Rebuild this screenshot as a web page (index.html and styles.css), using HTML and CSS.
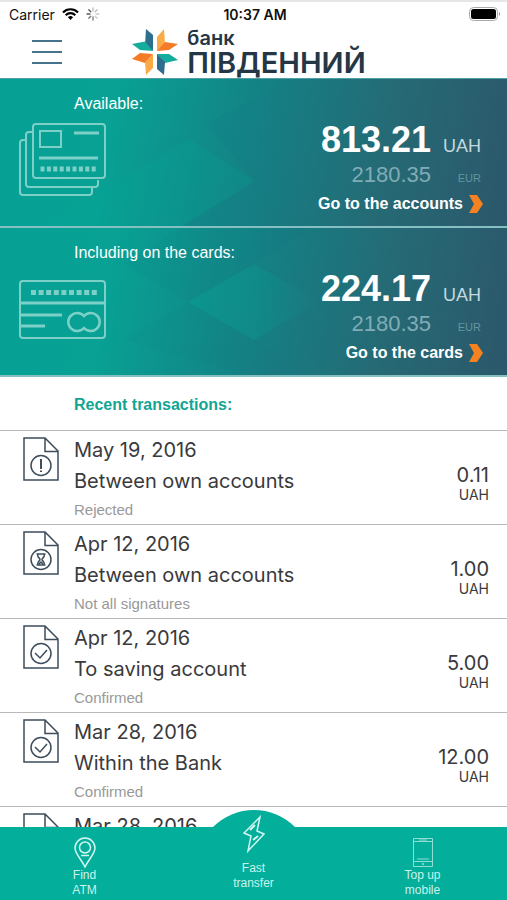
FILE: index.html
```html
<!DOCTYPE html>
<html lang="en">

<head>
    <meta charset="UTF-8">
    <meta name="viewport" content="width=device-width, initial-scale=1.0">
    <title>Банк Південний</title>
    <link rel="stylesheet" href="styles.css">
</head>

<body>
    <!-- shared shapes -->
    <svg class="sprite" aria-hidden="true">
        <symbol id="doc" viewBox="0 0 36 44">
            <path d="M1 1H22L35 14V43H1ZM22 1V14.500H35" />
            <circle cx="18" cy="28.500" r="10" />
        </symbol>
        <symbol id="check" viewBox="0 0 36 44">
            <path d="M12 28L17 33L24 25" />
        </symbol>
    </svg>

    <header class="header">
        <div class="status-bar">
            <div class="carrier">
                <span>Carrier</span>
                <svg width="17" height="12" viewBox="0 0 17 12">
                    <path d="M8.500 12L5.900 9.200A3.800 3.800 0 0 1 11.100 9.200Z" fill="#000" />
                    <path d="M3.700 7.200A6.800 6.800 0 0 1 13.300 7.200M1 4.400A10.500 10.500 0 0 1 16 4.400" fill="none" stroke="#000" stroke-width="2.200" />
                </svg>
                <svg class="spinner" width="14" height="14" viewBox="0 0 14 14" fill="none" stroke-width="1.300" stroke-linecap="round">
                    <path d="M7 1V4M11.200 2.800L9.200 4.800" stroke="#bbb" />
                    <path d="M13 7H10M11.200 11.200L9.200 9.200" stroke="#ccc" />
                    <path d="M7 13V10M2.800 11.200L4.800 9.200" stroke="#777" />
                    <path d="M1 7H4M2.800 2.800L4.800 4.800" stroke="#555" />
                </svg>
            </div>
            <time class="clock">10:37 AM</time>
            <svg class="battery" width="32" height="14" viewBox="0 0 32 14">
                <rect x="0.500" y="0.500" width="28" height="13" rx="4" fill="#fff" stroke="#aaa" />
                <rect x="2" y="2" width="25" height="10" rx="2.500" />
                <path d="M30 5Q32 7 30 9Z" fill="#888" />
            </svg>
        </div>

        <div class="nav">
            <button class="menu" aria-label="Menu"><span></span><span></span><span></span></button>
            <div class="brand">
                <svg width="48" height="48" viewBox="0 0 48 48">
                    <path d="M15 1L22 7V23L14 17Z" fill="#2b6e8e" />
                    <path d="M1 16L14 13.500L22 23L9 22Z" fill="#14ac9c" />
                    <path d="M33 1L34 17L26 23V9Z" fill="#fbab45" />
                    <path d="M34 14L47 16L38 22L26 23Z" fill="#f47b28" />
                    <path d="M1 31L9 25L22 26L14 35Z" fill="#f47b28" />
                    <path d="M22 26V40L15 47L14 34Z" fill="#fbab45" />
                    <path d="M26 26L38 26L47 32L34 35Z" fill="#14ac9c" />
                    <path d="M26 26L34 34L33 47L26 41Z" fill="#2b6e8e" />
                </svg>
                <div class="brand-name">
                    <span class="brand-small">банк</span>
                    <span class="brand-big">ПІВДЕННИЙ</span>
                </div>
            </div>
        </div>
    </header>

    <section class="balance">
        <svg class="facets" viewBox="0 0 507 147" preserveAspectRatio="none">
            <polygon points="118,102 190,60 255,102 190,142" fill="#00b09c" fill-opacity="0.160" />
            <polygon points="45,147 118,102 190,142 182,147" fill="#00b09c" fill-opacity="0.160" />
            <polygon points="205,45 290,0 310,0 310,147 182,147 255,102" fill="url(#shade)" />
            <linearGradient id="shade">
                <stop offset="0" stop-color="#15607c" stop-opacity="0.120" />
                <stop offset="1" stop-color="#15607c" stop-opacity="0" />
            </linearGradient>
        </svg>
        <h2>Available:</h2>
        <div class="balance-row">
            <svg class="card-icon" width="88" height="74" viewBox="0 0 88 74">
                <g fill="none" stroke-width="2">
                    <path d="M7 17H4Q1 17 1 20V69Q1 72 4 72H70Q73 72 73 69V65" />
                    <path d="M13 9H10Q7 9 7 12V61Q7 64 10 64H76Q79 64 79 61V57" />
                    <rect x="14" y="1" width="72" height="54" rx="3" />
                    <rect x="21" y="8" width="21" height="16" />
                    <path d="M55 10H80" stroke-width="3" />
                    <path d="M20 35H79" stroke-width="3" />
                </g>
                <path d="M21.500 46H78" stroke-width="5" stroke-dasharray="4 2.400" />
            </svg>
            <div class="sums">
                <span class="main">813.21</span><span class="main-cur">UAH</span>
                <span class="alt">2180.35</span><span class="alt-cur">EUR</span>
                <a href="#accounts">Go to the accounts
                    <svg width="14" height="18" viewBox="0 0 14 18"><path d="M0 0H8L14 9L8 18H0L5 9Z" /></svg>
                </a>
            </div>
        </div>
    </section>

    <section class="balance">
        <svg class="facets" viewBox="0 0 507 147" preserveAspectRatio="none">
            <polygon points="188,74 254,36 320,74 254,112" fill="url(#glow)" />
            <polygon points="124,36 180,0 310,0 254,36 188,74" fill="#15607c" fill-opacity="0.060" />
            <polygon points="188,74 254,112 310,147 250,147 124,112" fill="#15607c" fill-opacity="0.040" />
            <linearGradient id="glow">
                <stop offset="0" stop-color="#00b09c" stop-opacity="0.200" />
                <stop offset="0.500" stop-color="#00b09c" stop-opacity="0.200" />
                <stop offset="1" stop-color="#00b09c" stop-opacity="0" />
            </linearGradient>
        </svg>
        <h2>Including on the cards:</h2>
        <div class="balance-row">
            <svg class="card-icon" width="88" height="60" viewBox="0 0 88 60">
                <g fill="none" stroke-width="2">
                    <rect x="1" y="1" width="85" height="57" rx="3" />
                    <path d="M1 23H86M1 35H43M1 46H26" stroke-width="3" />
                    <path d="M65 36A9 9 0 1 0 65 48A9 9 0 1 0 65 36Z" stroke-width="2.500" />
                </g>
                <path d="M12 12.500H78" stroke-width="5" stroke-dasharray="5 2.600" />
            </svg>
            <div class="sums">
                <span class="main">224.17</span><span class="main-cur">UAH</span>
                <span class="alt">2180.35</span><span class="alt-cur">EUR</span>
                <a href="#cards">Go to the cards
                    <svg width="14" height="18" viewBox="0 0 14 18"><path d="M0 0H8L14 9L8 18H0L5 9Z" /></svg>
                </a>
            </div>
        </div>
    </section>

    <main class="recent">
        <h2>Recent transactions:</h2>
        <ul>
            <li>
                <svg class="doc" width="36" height="44" viewBox="0 0 36 44">
                    <use href="#doc" />
                    <path d="M18 22V32M18 33.500V35" stroke-width="2" />
                </svg>
                <div class="info">
                    <time>May 19, 2016</time>
                    <span>Between own accounts</span>
                    <small>Rejected</small>
                </div>
                <div class="amount">0.11<span>UAH</span></div>
            </li>
            <li>
                <svg class="doc" width="36" height="44" viewBox="0 0 36 44">
                    <use href="#doc" />
                    <path d="M13.500 23H22.500M13.500 34H22.500M14.500 23C14.500 27 17 27 17 28.500S14.500 30 14.500 34M21.500 23C21.500 27 19 27 19 28.500S21.500 30 21.500 34M16 33L18 31L20 33" />
                </svg>
                <div class="info">
                    <time>Apr 12, 2016</time>
                    <span>Between own accounts</span>
                    <small>Not all signatures</small>
                </div>
                <div class="amount">1.00<span>UAH</span></div>
            </li>
            <li>
                <svg class="doc" width="36" height="44" viewBox="0 0 36 44">
                    <use href="#doc" />
                    <use href="#check" />
                </svg>
                <div class="info">
                    <time>Apr 12, 2016</time>
                    <span>To saving account</span>
                    <small>Confirmed</small>
                </div>
                <div class="amount">5.00<span>UAH</span></div>
            </li>
            <li>
                <svg class="doc" width="36" height="44" viewBox="0 0 36 44">
                    <use href="#doc" />
                    <use href="#check" />
                </svg>
                <div class="info">
                    <time>Mar 28, 2016</time>
                    <span>Within the Bank</span>
                    <small>Confirmed</small>
                </div>
                <div class="amount">12.00<span>UAH</span></div>
            </li>
            <li>
                <svg class="doc" width="36" height="44" viewBox="0 0 36 44">
                    <use href="#doc" />
                </svg>
                <div class="info">
                    <time>Mar 28, 2016</time>
                </div>
            </li>
        </ul>
    </main>

    <nav class="tabs">
        <button>
            <svg width="22" height="31" viewBox="0 0 22 31">
                <path d="M11 30C8 23 1 17 1 11A10 10 0 0 1 21 11C21 17 14 23 11 30Z" />
                <circle cx="11" cy="10.500" r="5.500" />
                <path d="M7 18.500H15" />
            </svg>
            <span>Find<br>ATM</span>
        </button>
        <button class="fast">
            <svg width="22" height="38" viewBox="0 0 22 38">
                <path d="M17 2L1 18L8 21L5 36L21 19L14 16Z" />
                <path d="M7 15L12 10M10 25L15 21" stroke-width="2" />
            </svg>
            <span>Fast<br>transfer</span>
        </button>
        <button>
            <svg class="thin" width="22" height="31" viewBox="0 0 22 31">
                <path d="M1.500 1.500H20.500V29.500H1.500ZM1.500 4.500H20.500M1.500 24.500H20.500M5 22H17M7 3H15" />
                <circle cx="11" cy="27" r="0.800" />
            </svg>
            <span>Top up<br>mobile</span>
        </button>
    </nav>
</body>

</html>
```

FILE: styles.css
```css
* {
    box-sizing: border-box;
}

body {
    margin: 0;
    height: 100vh;
    display: flex;
    flex-direction: column;
    overflow: hidden;
    background-color: #fff;
    color: #3a3a3c;
    font-family: "Liberation Sans", Arial, sans-serif;
}

h2 {
    margin: 0;
    font-size: 16px;
    line-height: 20px;
}

button {
    padding: 0;
    border: none;
    background: none;
    font-family: inherit;
    cursor: pointer;
}

svg {
    display: block;
    flex: none;
}

.sprite {
    position: absolute;
    width: 0;
    height: 0;
}

/* header */
.header {
    flex: none;
    border-top: 2px solid #e6e6e6;
    border-bottom: 1px solid #4f9fa5;
}

.status-bar {
    display: grid;
    grid-template-columns: 1fr auto 1fr;
    align-items: center;
    height: 24px;
    padding: 0 6px 0 9px;
    font-family: Inter, sans-serif;
    font-size: 14px;
    color: #111;
}

.carrier {
    display: flex;
    align-items: center;
    gap: 7px;
}

.clock {
    font-weight: 600;
}

.battery {
    justify-self: end;
}

.nav {
    display: grid;
    grid-template-columns: 1fr auto 1fr;
    align-items: center;
    height: 52px;
    padding: 0 10px 0 0;
}

.menu {
    display: flex;
    flex-direction: column;
    justify-content: space-between;
    width: 30px;
    height: 24px;
    margin-left: 32px;
}

.menu span {
    height: 2px;
    background-color: #45748c;
}

.brand {
    display: flex;
    align-items: center;
    gap: 8px;
    color: #253746;
    font-family: Inter, sans-serif;
    font-weight: 600;
}

.brand-name {
    display: flex;
    flex-direction: column;
}

.brand-small {
    font-size: 20px;
    line-height: 22px;
}

.brand-big {
    font-size: 29px;
    line-height: 28px;
}

/* balances */
.balance {
    position: relative;
    flex: none;
    min-height: 149px;
    padding: 15px 24px 0 19px;
    border-bottom: 2px solid #86bfc1;
    background: linear-gradient(100deg, #06a095 0%, #08a194 22%, #157f84 52%, #256a75 75%, #2c576b 100%);
    background-clip: padding-box;
    color: #fff;
}

.facets {
    position: absolute;
    inset: 0;
    width: 100%;
    height: 100%;
}

.balance h2 {
    position: relative;
    padding-left: 55px;
    font-weight: normal;
}

.balance-row {
    position: relative;
    display: flex;
    justify-content: space-between;
    height: 108px;
}

.card-icon {
    margin-top: 9px;
    align-self: flex-start;
    fill: none;
    stroke: #7dd0c8;
}

.balance + .balance .card-icon {
    margin-top: 17px;
}

.sums {
    display: grid;
    grid-template-columns: 1fr 52px;
    grid-template-rows: 44px 28px 28px;
    align-items: baseline;
    padding-top: 4px;
    text-align: right;
}

.main {
    font-size: 36px;
    font-weight: bold;
    line-height: 44px;
}

.main-cur {
    padding-right: 2px;
    color: #c2d9de;
    font-size: 18px;
}

.alt {
    color: #81acb6;
    font-size: 22px;
}

.alt-cur {
    padding-right: 2px;
    color: #6394a0;
    font-size: 11px;
}

.sums a {
    grid-column: 1 / 3;
    display: flex;
    align-items: center;
    justify-content: flex-end;
    gap: 6px;
    color: #fff;
    font-size: 16px;
    font-weight: bold;
    line-height: 28px;
    text-decoration: none;
}

.sums a svg {
    fill: #f58220;
}

/* transactions */
.recent {
    flex: 1;
    min-height: 0;
    overflow: hidden;
}

.recent h2 {
    padding: 18px 0 15px 74px;
    color: #12a594;
}

.recent ul {
    margin: 0;
    padding: 0;
    list-style: none;
}

.recent li {
    display: flex;
    height: 94px;
    padding: 0 18px 0 23px;
    border-top: 1px solid #b8b8b8;
    font-family: Inter, sans-serif;
}

.doc {
    margin-top: 6px;
    fill: none;
    stroke: #3d4d5c;
    stroke-width: 1.5;
}

.info {
    flex: 1;
    display: flex;
    flex-direction: column;
    padding: 4px 0 0 15px;
    font-size: 20px;
    line-height: 31px;
}

.info small {
    color: #999;
    font-family: "Liberation Sans", Arial, sans-serif;
    font-size: 15px;
    line-height: 25px;
}

.amount {
    padding-top: 32px;
    font-size: 20px;
    line-height: 24px;
    text-align: right;
}

.amount span {
    display: block;
    font-size: 14px;
    line-height: 16px;
}

/* bottom bar */
.tabs {
    position: relative;
    flex: none;
    display: grid;
    grid-template-columns: repeat(3, 1fr);
    height: 73px;
    background-color: #03ae9b;
}

.tabs button {
    display: flex;
    flex-direction: column;
    align-items: center;
    padding-top: 10px;
    color: #c9f3ec;
    font-size: 12px;
    line-height: 15px;
}

.tabs svg {
    fill: none;
    stroke: #d5f7f1;
    stroke-width: 1.5;
}

.tabs .thin {
    stroke: #8fded3;
    stroke-width: 1;
}

/* round bump behind the middle tab */
.tabs .fast::before {
    content: "";
    position: absolute;
    top: -17px;
    left: 50%;
    width: 116px;
    height: 90px;
    margin-left: -58px;
    border-radius: 58px 58px 0 0;
    background-color: #03ae9b;
}

.tabs .fast {
    padding-top: 0;
    margin-top: -12px;
}

.fast svg,
.fast span {
    position: relative;
}

.fast svg {
    margin-bottom: 8px;
}
```
